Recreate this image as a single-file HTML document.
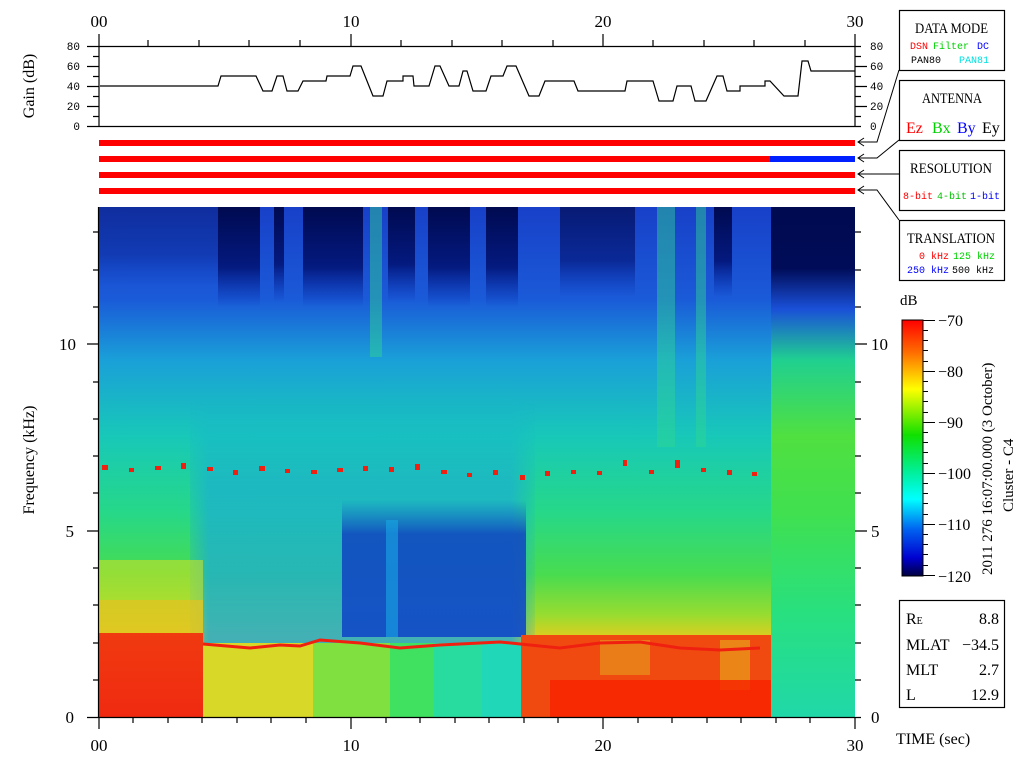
<!DOCTYPE html>
<html><head><meta charset="utf-8"><style>
html,body{margin:0;padding:0;background:#fff;width:1024px;height:768px;overflow:hidden}
svg{display:block}
.t{font-family:"Liberation Serif",serif;fill:#000}
.m{font-family:"Liberation Mono",monospace}
</style></head><body>
<svg width="1024" height="768" viewBox="0 0 1024 768" xmlns="http://www.w3.org/2000/svg">
<defs>
<linearGradient id="base" x1="0" y1="0" x2="0" y2="1" gradientUnits="objectBoundingBox">
<stop offset="0" stop-color="#1840c8"/>
<stop offset="0.18" stop-color="#1a5ad8"/>
<stop offset="0.30" stop-color="#1aa0d8"/>
<stop offset="0.45" stop-color="#18c8b8"/>
<stop offset="0.60" stop-color="#26d888"/>
<stop offset="0.72" stop-color="#48dc50"/>
<stop offset="0.80" stop-color="#98dc30"/>
<stop offset="0.84" stop-color="#d8d020"/>
<stop offset="1" stop-color="#e8b020"/>
</linearGradient>
<linearGradient id="navy" x1="0" y1="0" x2="0" y2="1">
<stop offset="0" stop-color="#000a50" stop-opacity="1"/>
<stop offset="0.6" stop-color="#001070" stop-opacity="0.85"/>
<stop offset="1" stop-color="#0020a0" stop-opacity="0"/>
</linearGradient>
<linearGradient id="midblue" x1="0" y1="0" x2="0" y2="1">
<stop offset="0" stop-color="#18a8e0" stop-opacity="0"/>
<stop offset="0.35" stop-color="#1aa8dc" stop-opacity="0.6"/>
<stop offset="1" stop-color="#1aa8dc" stop-opacity="0.8"/>
</linearGradient>
<linearGradient id="midx" x1="0" y1="0" x2="1" y2="0">
<stop offset="0" stop-color="#fff" stop-opacity="0"/>
<stop offset="0.08" stop-color="#fff" stop-opacity="1"/>
<stop offset="0.92" stop-color="#fff" stop-opacity="1"/>
<stop offset="1" stop-color="#fff" stop-opacity="0"/>
</linearGradient>
<mask id="mm"><rect x="180" y="400" width="360" height="260" fill="url(#midx)"/></mask>
<linearGradient id="dblue" x1="0" y1="0" x2="0" y2="1">
<stop offset="0" stop-color="#1050d0" stop-opacity="0"/>
<stop offset="0.25" stop-color="#1044c0" stop-opacity="0.85"/>
<stop offset="1" stop-color="#1048c8" stop-opacity="0.9"/>
</linearGradient>
<linearGradient id="red" x1="0" y1="0" x2="0" y2="1">
<stop offset="0" stop-color="#f03a10"/>
<stop offset="1" stop-color="#f02a10"/>
</linearGradient>
<linearGradient id="right" x1="0" y1="0" x2="0" y2="1">
<stop offset="0" stop-color="#000a50"/>
<stop offset="0.12" stop-color="#000c58"/>
<stop offset="0.2" stop-color="#1a50d8"/>
<stop offset="0.3" stop-color="#20d090"/>
<stop offset="0.45" stop-color="#50e040"/>
<stop offset="0.6" stop-color="#40e050"/>
<stop offset="0.8" stop-color="#28e080"/>
<stop offset="1" stop-color="#20d8a8"/>
</linearGradient>
<linearGradient id="cbar" x1="0" y1="0" x2="0" y2="1">
<stop offset="0" stop-color="#ff0000"/>
<stop offset="0.13" stop-color="#ff7000"/>
<stop offset="0.27" stop-color="#ffff00"/>
<stop offset="0.45" stop-color="#10e000"/>
<stop offset="0.6" stop-color="#00f0a0"/>
<stop offset="0.7" stop-color="#00ffff"/>
<stop offset="0.82" stop-color="#0060f0"/>
<stop offset="0.93" stop-color="#0000d0"/>
<stop offset="1" stop-color="#000040"/>
</linearGradient>
</defs>

<g class="t" font-size="17" text-anchor="middle">
<text x="99" y="27">00</text><text x="351" y="27">10</text><text x="603" y="27">20</text><text x="855" y="27">30</text>
</g>
<g stroke="#000" stroke-width="1.2" fill="none">
<line x1="87" y1="46.5" x2="861" y2="46.5"/>
<line x1="87" y1="126.5" x2="861" y2="126.5"/>
<line x1="99" y1="34" x2="99" y2="126"/>
<line x1="855" y1="34" x2="855" y2="126"/>
<line x1="351" y1="34" x2="351" y2="46"/><line x1="603" y1="34" x2="603" y2="46"/>
<path d="M148 40V46M199 40V46M249 40V46M300 40V46M401 40V46M452 40V46M502 40V46M553 40V46M653 40V46M704 40V46M754 40V46M805 40V46"/>
<path d="M87 66.5H99M87 86.5H99M87 106.5H99M93 56.5H99M93 76.5H99M93 96.5H99M93 116.5H99"/>
<path d="M855 66.5H867M855 86.5H867M855 106.5H867M855 56.5H861M855 76.5H861M855 96.5H861M855 116.5H861"/>
</g>
<g class="m" font-size="11" text-anchor="end">
<text x="80" y="50">80</text><text x="80" y="70">60</text><text x="80" y="90">40</text><text x="80" y="110">20</text><text x="80" y="130">0</text>
</g>
<g class="m" font-size="11">
<text x="870" y="50">80</text><text x="870" y="70">60</text><text x="870" y="90">40</text><text x="870" y="110">20</text><text x="870" y="130">0</text>
</g>
<text class="t" font-size="16" transform="translate(34,86) rotate(-90)" text-anchor="middle">Gain (dB)</text>
<polyline fill="none" stroke="#000" stroke-width="1.2" points="100,86 218,86 221,76 256,76 263,91 272,91 277,76 283,76 287,91 298,91 303,81 326,81 327,76 350,76 353,66 361,66 373,96 383,96 387,81 403,81 403,76 413,76 414,86 429,86 435,66 440,66 449,86 459,86 463,71 467,71 473,91 486,91 491,76 503,76 507,66 516,66 529,96 539,96 545,81 574,81 578,91 625,91 627,81 653,81 659,101 673,101 677,86 691,86 695,101 706,101 717,76 723,76 727,91 740,91 740,86 765,86 765,81 770,81 784,96 798,96 802,61 808,61 811,71 855,71"/>

<rect x="99" y="140" width="756" height="6" fill="#ff0000"/>
<rect x="99" y="156" width="671" height="6" fill="#ff0000"/>
<rect x="770" y="156" width="85" height="6" fill="#0020ff"/>
<rect x="99" y="172" width="756" height="6" fill="#ff0000"/>
<rect x="99" y="188" width="756" height="6" fill="#ff0000"/>

<rect x="99" y="207" width="672" height="510" fill="url(#base)"/>
<g fill="url(#navy)">
<rect x="218" y="207" width="42" height="100"/>
<rect x="274" y="207" width="10" height="95"/>
<rect x="303" y="207" width="60" height="100"/>
<rect x="388" y="207" width="27" height="95"/>
<rect x="428" y="207" width="42" height="100"/>
<rect x="486" y="207" width="32" height="100"/>
<rect x="560" y="207" width="75" height="90" opacity="0.7"/>
<rect x="714" y="207" width="18" height="90"/>
<rect x="99" y="207" width="120" height="80" opacity="0.35"/>
</g>
<g fill="#30d890" opacity="0.45">
<rect x="657" y="207" width="18" height="240"/>
<rect x="696" y="207" width="10" height="240"/>
<rect x="370" y="207" width="12" height="150"/>
</g>
<g mask="url(#mm)">
<rect x="190" y="400" width="345" height="245" fill="url(#midblue)"/>
</g>
<rect x="342" y="500" width="184" height="137" fill="url(#dblue)"/>
<rect x="386" y="520" width="12" height="117" fill="#18a8e4" opacity="0.6"/>
<rect x="99" y="560" width="104" height="75" fill="#c8e028" opacity="0.6"/>
<rect x="99" y="600" width="104" height="35" fill="#e8c020" opacity="0.7"/>
<rect x="99" y="633" width="104" height="84" fill="url(#red)"/>
<rect x="203" y="643" width="110" height="74" fill="#d8d828"/>
<rect x="313" y="643" width="77" height="74" fill="#80e040"/>
<rect x="390" y="643" width="44" height="74" fill="#40e060"/>
<rect x="434" y="643" width="48" height="74" fill="#28dca0"/>
<rect x="482" y="643" width="39" height="74" fill="#20d8b8"/>
<rect x="521" y="635" width="250" height="82" fill="#f04a10"/>
<rect x="600" y="640" width="50" height="35" fill="#e8a020" opacity="0.6"/>
<rect x="720" y="640" width="30" height="50" fill="#e8c020" opacity="0.5"/>
<rect x="550" y="680" width="221" height="37" fill="#f82000" opacity="0.8"/>
<polyline fill="none" stroke="#f02010" stroke-width="3" points="203,644 250,648 280,645 300,646 320,640 360,643 400,648 440,645 500,642 530,645 560,648 600,643 640,642 680,648 720,650 760,648"/>
<rect x="771" y="207" width="84" height="510" fill="url(#right)"/>
<g fill="#f02010">
<rect x="102" y="465" width="6" height="5"/><rect x="129" y="468" width="5" height="4"/><rect x="155" y="466" width="6" height="4"/><rect x="181" y="463" width="5" height="6"/><rect x="207" y="467" width="6" height="4"/><rect x="233" y="470" width="5" height="5"/><rect x="259" y="466" width="6" height="5"/><rect x="285" y="469" width="5" height="4"/><rect x="311" y="470" width="6" height="4"/><rect x="337" y="468" width="6" height="4"/><rect x="363" y="466" width="5" height="5"/><rect x="389" y="467" width="5" height="5"/><rect x="415" y="464" width="5" height="6"/><rect x="441" y="470" width="6" height="4"/><rect x="467" y="473" width="5" height="4"/><rect x="493" y="470" width="5" height="5"/><rect x="520" y="475" width="5" height="5"/><rect x="545" y="471" width="5" height="5"/><rect x="571" y="470" width="5" height="4"/><rect x="597" y="471" width="5" height="4"/><rect x="623" y="460" width="4" height="6"/><rect x="649" y="470" width="5" height="4"/><rect x="675" y="460" width="5" height="8"/><rect x="701" y="468" width="5" height="4"/><rect x="727" y="470" width="5" height="5"/><rect x="752" y="472" width="5" height="4"/>
</g>

<g stroke="#000" stroke-width="1.2" fill="none">
<line x1="98.5" y1="207" x2="98.5" y2="717"/>
<line x1="87" y1="717.5" x2="861" y2="717.5"/>
<path d="M99 717V729M351 717V729M603 717V729M855 717V729"/>
<path d="M133 717V723M168 717V723M202 717V723M237 717V723M271 717V723M306 717V723M386 717V723M420 717V723M455 717V723M489 717V723M524 717V723M558 717V723M638 717V723M672 717V723M707 717V723M741 717V723M776 717V723M810 717V723"/>
<path d="M87 531H99M87 344H99M93 680H99M93 643H99M93 605H99M93 568H99M93 493H99M93 456H99M93 419H99M93 382H99M93 307H99M93 270H99M93 232H99"/>
<path d="M855 531H867M855 344H867M855 680H861M855 643H861M855 605H861M855 568H861M855 493H861M855 456H861M855 419H861M855 382H861M855 307H861M855 270H861M855 232H861"/>
</g>
<g class="t" font-size="17">
<text x="74" y="723" text-anchor="end">0</text><text x="74" y="537" text-anchor="end">5</text><text x="76" y="350" text-anchor="end">10</text>
<text x="871" y="723">0</text><text x="871" y="537">5</text><text x="871" y="350">10</text>
</g>
<g class="t" font-size="17" text-anchor="middle">
<text x="99" y="751">00</text><text x="351" y="751">10</text><text x="603" y="751">20</text><text x="855" y="751">30</text>
</g>
<text class="t" font-size="16" transform="translate(34,460) rotate(-90)" text-anchor="middle">Frequency (kHz)</text>
<text class="t" font-size="16" x="896" y="744">TIME (sec)</text>

<g fill="#fff" stroke="#000" stroke-width="1.2">
<rect x="899.5" y="10.5" width="105" height="60"/>
<rect x="899.5" y="80.5" width="105" height="60"/>
<rect x="899.5" y="150.5" width="105" height="60"/>
<rect x="899.5" y="220.5" width="105" height="60"/>
<rect x="899.5" y="600.5" width="105" height="107"/>
</g>
<g stroke="#000" stroke-width="1" fill="none">
<path d="M899 70L877 142H858M864 138L858 142L864 146"/>
<path d="M899 140L877 158H858M864 154L858 158L864 162"/>
<path d="M899 174H858M864 170L858 174L864 178"/>
<path d="M899 220L877 190H858M864 186L858 190L864 194"/>
</g>
<g class="t" font-size="15">
<text x="915" y="33" textLength="73" lengthAdjust="spacingAndGlyphs">DATA MODE</text>
<text x="922" y="103" textLength="60" lengthAdjust="spacingAndGlyphs">ANTENNA</text>
<text x="910" y="173" textLength="82" lengthAdjust="spacingAndGlyphs">RESOLUTION</text>
<text x="907" y="243" textLength="88" lengthAdjust="spacingAndGlyphs">TRANSLATION</text>
</g>
<g class="m" font-size="10">
<text x="910" y="49" fill="#ff0000">DSN</text><text x="933" y="49" fill="#00d000">Filter</text><text x="977" y="49" fill="#0000ff">DC</text>
<text x="911" y="63" fill="#000">PAN80</text><text x="959" y="63" fill="#00e0e0">PAN81</text>
<text x="903" y="199" fill="#ff0000">8-bit</text><text x="937" y="199" fill="#00c000">4-bit</text><text x="970" y="199" fill="#0000ff">1-bit</text>
<text x="919" y="259" fill="#ff0000">0 kHz</text><text x="953" y="259" fill="#00d000">125 kHz</text>
<text x="907" y="273" fill="#0000ff">250 kHz</text><text x="952" y="273" fill="#000">500 kHz</text>
</g>
<g class="t" font-size="16">
<text x="906" y="133" fill="#ff0000">Ez</text><text x="932" y="133" fill="#00d000">Bx</text><text x="957" y="133" fill="#0000ff">By</text><text x="982" y="133" fill="#000">Ey</text>
</g>

<text class="t" font-size="15" x="900" y="305">dB</text>
<rect x="902" y="320" width="21" height="256" fill="url(#cbar)" stroke="#000" stroke-width="1"/>
<g stroke="#000" stroke-width="1">
<path d="M923 320.5H935M923 371.5H935M923 422.5H935M923 473.5H935M923 524.5H935M923 575.5H935"/>
<path d="M923 330.5H928M923 340.5H928M923 350.5H928M923 361.5H928M923 381.5H928M923 391.5H928M923 401.5H928M923 412.5H928M923 432.5H928M923 442.5H928M923 452.5H928M923 463.5H928M923 483.5H928M923 493.5H928M923 503.5H928M923 514.5H928M923 534.5H928M923 544.5H928M923 554.5H928M923 565.5H928"/>
</g>
<g class="t" font-size="16">
<text x="938" y="326">−70</text><text x="938" y="377">−80</text><text x="938" y="428">−90</text><text x="938" y="479">−100</text><text x="938" y="530">−110</text><text x="938" y="582">−120</text>
</g>
<text class="t" font-size="15" transform="translate(992,575) rotate(-90)">2011 276 16:07:00.000 (3 October)</text>
<text class="t" font-size="15" transform="translate(1013,512) rotate(-90)">Cluster - C4</text>

<g class="t" font-size="16">
<text x="906" y="624">R<tspan font-size="10">E</tspan></text><text x="999" y="624" text-anchor="end">8.8</text>
<text x="906" y="650">MLAT</text><text x="999" y="650" text-anchor="end">−34.5</text>
<text x="906" y="675">MLT</text><text x="999" y="675" text-anchor="end">2.7</text>
<text x="906" y="700">L</text><text x="999" y="700" text-anchor="end">12.9</text>
</g>
</svg>
</body></html>
